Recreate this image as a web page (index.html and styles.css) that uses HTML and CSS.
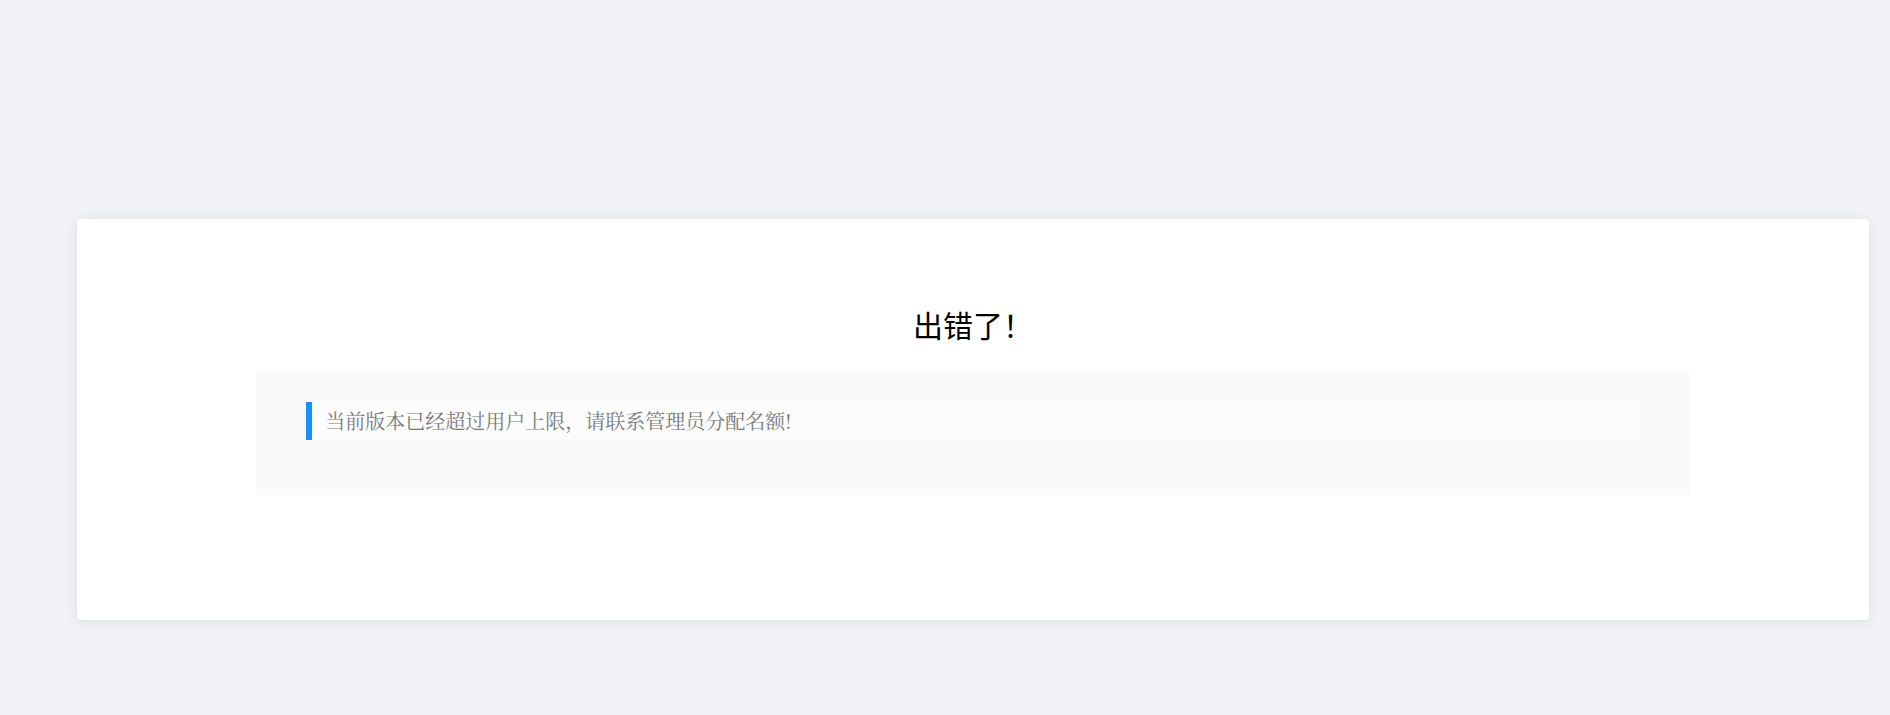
FILE: index.html
```html
<!DOCTYPE html>
<html lang="zh-CN">
<head>
    <meta charset="UTF-8">
    <meta name="viewport" content="width=device-width, initial-scale=1.0">
    <title>出错了</title>
    <link rel="stylesheet" href="styles.css">
</head>
<body>

<div class="page">
    <div class="card">
        <h2 class="title">出错了！</h2>
        <div class="message-box">
            <blockquote class="message">当前版本已经超过用户上限，请联系管理员分配名额!</blockquote>
        </div>
    </div>
</div>

</body>
</html>
```

FILE: styles.css
```css
body {
    margin: 0;
    background-color: #f0f2f5;
    font-family: "Noto Sans CJK SC", "Microsoft YaHei", sans-serif;
}
.page {
    padding: 219px 21px 95px 77px;
}
.card {
    background-color: #fff;
    border-radius: 4px;
    box-shadow: 0 2px 14px rgba(0, 0, 0, 0.08);
    padding: 85px 0 125px;
}
.title {
    margin: 0;
    font-size: 30px;
    font-weight: normal;
    line-height: 40px;
    color: #000;
    text-align: center;
}
.message-box {
    width: 80%;
    margin: 28px auto 0;
    padding: 30px 50px 55px;
    box-sizing: border-box;
    background-color: #fafafa;
    border-radius: 2px;
}
.message {
    margin: 0;
    padding-left: 13px;
    border-left: 6px solid #1890ff;
    background-color: #fcfcfc;
    font-family: "Noto Serif CJK SC", "SimSun", "Noto Sans CJK SC", serif;
    font-size: 20px;
    line-height: 38px;
    color: #7a7a7a;
}
```
